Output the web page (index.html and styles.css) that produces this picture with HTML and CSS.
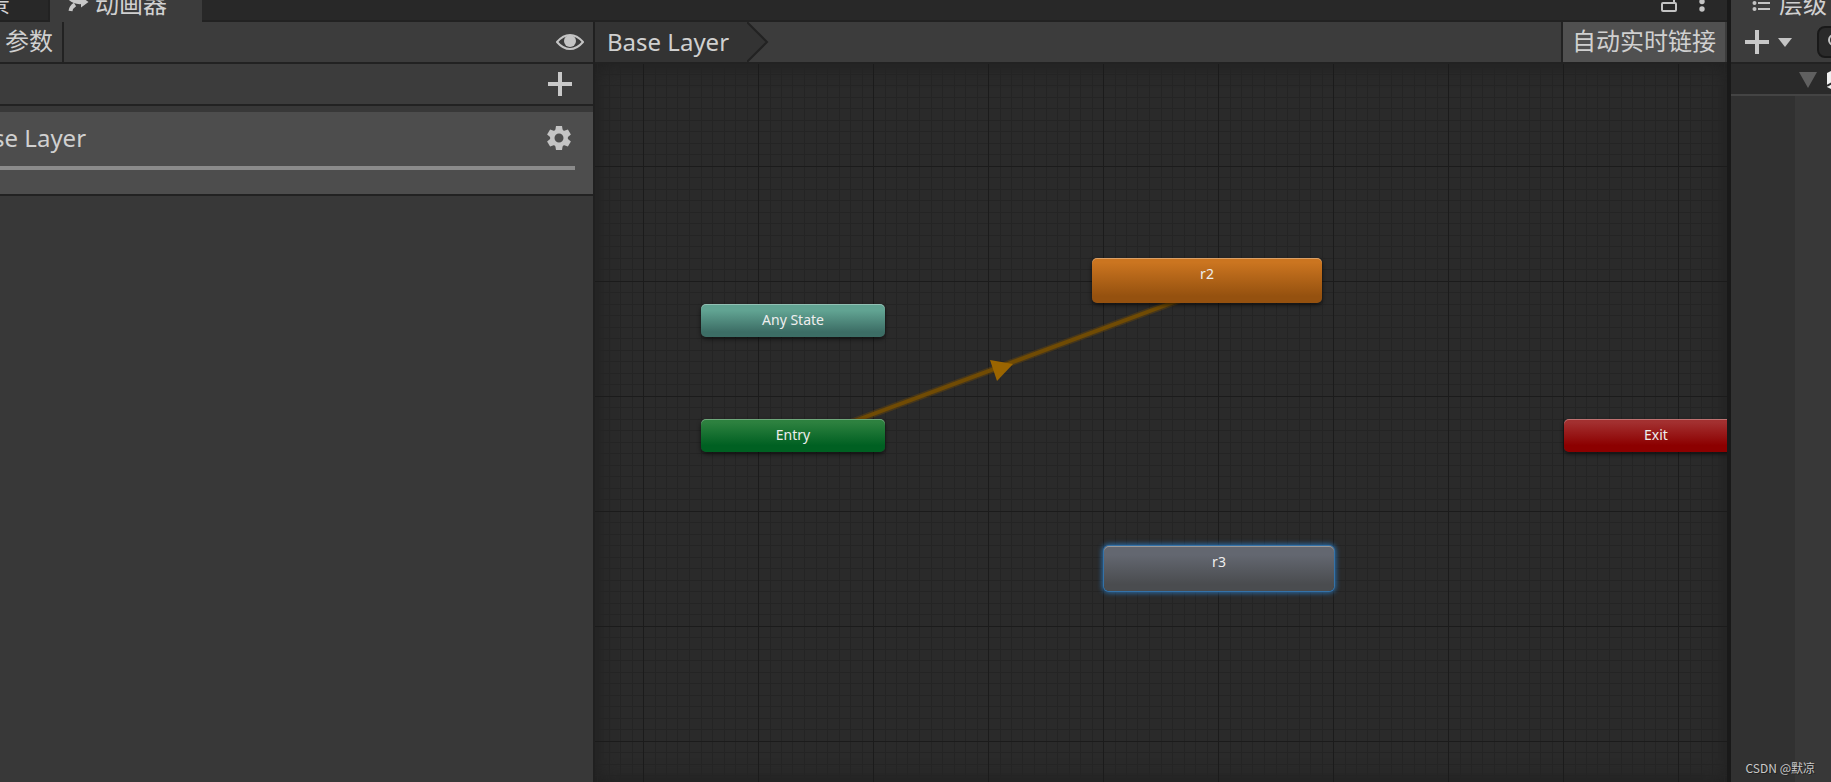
FILE: index.html
```html
<!DOCTYPE html>
<html lang="zh-CN">
<head>
<meta charset="utf-8">
<title>动画器</title>
<link rel="stylesheet" href="styles.css">
</head>
<body>
<div class="editor">
  <section class="animator">
    <header class="tabs">
      <button class="tab tab-scene" type="button">场景</button>
      <button class="tab tab-active" type="button">
        <svg class="tab-icon" width="22" height="24" viewBox="0 0 22 24"><path d="M1 6Q6 13 15 12" fill="none" stroke="#c8c8c8" stroke-width="4"/><path d="M14 6.500L21.500 12L14 17.500Z" fill="#c8c8c8"/><path d="M8 14.500Q4 17 3.500 21" fill="none" stroke="#c8c8c8" stroke-width="4"/></svg>
        动画器
      </button>
      <div class="window-actions">
        <button class="icon-button" type="button" aria-label="锁定"><svg width="16" height="20" viewBox="0 0 16 20"><rect x="1" y="11" width="14" height="8" rx="1" fill="none" stroke="#c4c4c4" stroke-width="2"/><path d="M13 11V6Q13 2 9 2" fill="none" stroke="#c4c4c4" stroke-width="2"/></svg></button>
        <button class="icon-button" type="button" aria-label="更多"><svg width="6" height="20" viewBox="0 0 6 20"><g fill="#c4c4c4"><circle cx="3" cy="2" r="2.700"/><circle cx="3" cy="9.500" r="2.700"/><circle cx="3" cy="17" r="2.700"/></g></svg></button>
      </div>
    </header>

    <div class="workspace">
      <aside class="layers">
        <div class="toolbar layers-toolbar">
          <button class="parameters" type="button">参数</button>
          <button class="icon-button" type="button" aria-label="显示"><svg width="28" height="18" viewBox="0 0 28 18"><path d="M1 9Q7 2 14 2T27 9Q21 16 14 16T1 9Z" fill="none" stroke="#c4c4c4" stroke-width="2"/><circle cx="14" cy="8" r="6" fill="#c4c4c4"/></svg></button>
        </div>
        <div class="add-row">
          <button class="icon-button" type="button" aria-label="添加图层"><svg width="24" height="24" viewBox="0 0 24 24"><path d="M12 0V24M0 12H24" stroke="#c8c8c8" stroke-width="4"/></svg></button>
        </div>
        <div class="layer">
          <div class="layer-head">
            <span class="layer-name">Base Layer</span>
            <button class="icon-button" type="button" aria-label="图层设置"><svg width="24" height="24" viewBox="0 0 24 24"><g fill="#c4c4c4"><path id="tooth" d="M9 0H15L16 6H8Z"/><use href="#tooth" transform="rotate(60 12 12)"/><use href="#tooth" transform="rotate(120 12 12)"/><use href="#tooth" transform="rotate(180 12 12)"/><use href="#tooth" transform="rotate(240 12 12)"/><use href="#tooth" transform="rotate(300 12 12)"/></g><circle cx="12" cy="12" r="6.700" fill="none" stroke="#c4c4c4" stroke-width="4.400"/></svg></button>
          </div>
          <div class="weight"></div>
        </div>
      </aside>

      <main class="graph">
        <nav class="toolbar graph-toolbar">
          <button class="crumb" type="button">Base Layer</button>
          <svg class="crumb-end" width="22" height="40" viewBox="0 0 22 40"><path d="M0 0L20 20L0 40Z" fill="#333"/><path d="M0 0L20 20L0 40" fill="none" stroke="#222" stroke-width="2"/></svg>
          <button class="live-link" type="button">自动实时链接</button>
        </nav>
        <div class="canvas">
          <svg class="canvas-lines" width="100%" height="100%">
            <defs>
              <pattern id="grid" x="48" y="102" width="115" height="115" patternUnits="userSpaceOnUse">
                <path d="M12.500 0V115M23.500 0V115M34.500 0V115M46.500 0V115M58.500 0V115M69.500 0V115M81.500 0V115M92.500 0V115M104.500 0V115M0 11.500H115M0 23.500H115M0 34.500H115M0 46.500H115M0 57.500H115M0 69.500H115M0 80.500H115M0 92.500H115M0 103.500H115" stroke="#242424"/>
                <path d="M.5 0V115M0 .5H115" stroke="#1b1b1b"/>
              </pattern>
            </defs>
            <rect width="100%" height="100%" fill="url(#grid)"/>
            <path d="M238 365L606 228" stroke="#704b08" stroke-opacity=".4" stroke-width="7" fill="none"/>
            <path d="M238 365L606 228" stroke="#704b04" stroke-width="4" fill="none"/>
            <path d="M395 296L418 300L402 317Z" fill="#9b6500"/>
          </svg>
          <div class="node small any">Any State</div>
          <div class="node small entry">Entry</div>
          <div class="node small exit">Exit</div>
          <div class="node state r2">r2</div>
          <div class="node state r3">r3</div>
        </div>
      </main>
    </div>
  </section>

  <aside class="hierarchy">
    <header class="hierarchy-tab">
      <svg width="18" height="22" viewBox="0 0 18 22"><g fill="#c4c4c4"><circle cx="2.500" cy="3" r="2"/><circle cx="2.500" cy="9" r="2"/><path d="M6 2H18V4H6ZM6 8H18V10H6Z"/></g></svg>
      层级
    </header>
    <div class="hierarchy-tools">
      <button class="icon-button add-menu" type="button" aria-label="创建"><svg width="48" height="24" viewBox="0 0 48 24"><path d="M12 0V24M0 12H24" stroke="#c8c8c8" stroke-width="4"/><path d="M33 8H47L40 17Z" fill="#c4c4c4"/></svg></button>
      <label class="search"><svg width="18" height="18" viewBox="0 0 18 18"><circle cx="6" cy="7" r="5" fill="none" stroke="#c4c4c4" stroke-width="2"/><path d="M10 11L16 17" stroke="#c4c4c4" stroke-width="2"/></svg><input type="search" aria-label="搜索"></label>
    </div>
    <div class="scene-row">
      <svg width="18" height="16" viewBox="0 0 18 16"><path d="M0 0H18L9 16Z" fill="#606060"/></svg>
      <svg width="20" height="20" viewBox="0 0 20 20"><path d="M0 3L6 0L19 4V17L6 20L0 17Z" fill="#f0f0f0"/><path d="M0 16L5 13" fill="none" stroke="#2a2a2a" stroke-width="2"/></svg>
    </div>
    <div class="tree"><div class="gutter"></div></div>
  </aside>
  <div class="watermark">CSDN @默凉</div>
</div>
</body>
</html>
```
FILE: styles.css
```css
* { box-sizing: border-box; }

body {
  margin: 0;
  background: #383838;
  color: #d0d0d0;
  font: 24px/32px "Noto Sans", "Noto Sans CJK SC", sans-serif;
}

button {
  margin: 0;
  padding: 0;
  border: 0;
  background: none;
  color: inherit;
  font: inherit;
}

svg { display: block; flex: none; }

.icon-button { display: flex; flex: none; }

.editor {
  display: grid;
  grid-template-columns: minmax(0, 1fr) 100px;
  height: 100vh;
  overflow: hidden;
}

.animator {
  display: flex;
  flex-direction: column;
  min-width: 0;
  border-right: 4px solid #191919;
}

.tabs {
  display: flex;
  align-items: flex-end;
  height: 22px;
  flex: none;
  overflow: hidden;
  background: #282828;
  box-shadow: inset 0 -2px #222;
}

.tab {
  display: flex;
  align-items: center;
  gap: 6px;
  height: 36px;
  flex: none;
  white-space: nowrap;
}

.tab-scene {
  justify-content: flex-end;
  width: 50px;
  padding-right: 38px;
  border-right: 2px solid #222;
  border-bottom: 2px solid #222;
}

.tab-active {
  width: 152px;
  padding-left: 17px;
  background: #3c3c3c;
}

.tab-icon { margin-bottom: 4px; }

.window-actions {
  display: flex;
  gap: 22px;
  margin-left: auto;
  padding: 0 22px 10px 0;
}

.workspace {
  display: grid;
  grid-template-columns: 593px minmax(0, 1fr);
  flex: 1;
  gap: 2px;
  min-height: 0;
  background: #202020;
}

.layers { background: #383838; overflow: hidden; }

.toolbar {
  display: flex;
  align-items: center;
  height: 42px;
  border-bottom: 2px solid #222;
  background: #3c3c3c;
}

.layers-toolbar { justify-content: space-between; padding-right: 9px; }

.parameters {
  width: 64px;
  height: 40px;
  padding: 0 0 2px 5px;
  border-right: 2px solid #222;
  text-align: left;
  white-space: nowrap;
}

.add-row {
  display: flex;
  justify-content: flex-end;
  align-items: center;
  height: 42px;
  padding-right: 21px;
  border-bottom: 2px solid #222;
  background: #3c3c3c;
}

.layer {
  height: 84px;
  margin-top: 6px;
  border-bottom: 2px solid #222;
  background: #4d4d4d;
}

.layer-head {
  display: flex;
  align-items: center;
  justify-content: space-between;
  height: 54px;
  padding: 0 22px 2px 0;
}

.layer-name { margin-left: -36px; white-space: nowrap; }

.weight { height: 4px; margin-right: 18px; background: #8b8b8b; }

.graph { display: flex; flex-direction: column; min-width: 0; }

.graph-toolbar { flex: none; padding-right: 2px; }

.crumb {
  height: 40px;
  width: 152px;
  padding-left: 12px;
  background: #333;
  text-align: left;
  white-space: nowrap;
}

.live-link {
  width: 164px;
  height: 40px;
  margin-left: auto;
  padding-bottom: 2px;
  border-left: 2px solid #222;
  background: #505050;
  white-space: nowrap;
}

.canvas {
  position: relative;
  flex: 1;
  overflow: hidden;
  background: #2a2a2a;
}

.canvas::before {
  content: "";
  position: absolute;
  inset: 0;
  box-shadow: inset 0 0 20px #1e1e1e;
  pointer-events: none;
}

.canvas-lines { position: absolute; inset: 0; }

.node {
  position: absolute;
  border-radius: 5px;
  color: #eee;
  font-size: 14px;
  text-align: center;
  box-shadow: inset 0 1px #ffffff50, 0 2px 4px #0009;
}

.small { width: 184px; height: 33px; line-height: 32px; }
.state { width: 230px; height: 45px; line-height: 32px; }

.any { left: 106px; top: 240px; background: linear-gradient(#61a392 20%, #3c6d65 85%); }
.entry { left: 106px; top: 355px; background: linear-gradient(#2d813f 10%, #006022 80%); }
.exit { left: 969px; top: 355px; background: linear-gradient(#a33030 10%, #8c0000 80%); }
.r2 { left: 497px; top: 194px; background: linear-gradient(#cb7520 10%, #95510f 85%); }

.r3 {
  left: 509px;
  top: 482px;
  background: linear-gradient(#636770 20%, #4a4c4f 85%);
  box-shadow: inset 0 1px #999, 0 0 0 1px #3472a8, 0 0 5px 2px #286ca8;
}

.hierarchy {
  display: flex;
  flex-direction: column;
  overflow: hidden;
  background: #3c3c3c;
}

.hierarchy-tab {
  display: flex;
  align-items: flex-end;
  flex: none;
  gap: 9px;
  height: 22px;
  padding-left: 21px;
  line-height: 36px;
  white-space: nowrap;
}

.hierarchy-tools {
  display: flex;
  align-items: center;
  flex: none;
  gap: 24px;
  height: 42px;
  padding-left: 14px;
  border-bottom: 2px solid #222;
}

.search {
  display: flex;
  align-items: center;
  flex: none;
  width: 240px;
  height: 32px;
  padding-left: 9px;
  border: 2px solid #191919;
  border-radius: 8px;
  background: #2a2a2a;
}

.search input { width: 180px; border: 0; background: none; color: inherit; }

.scene-row {
  display: flex;
  align-items: center;
  flex: none;
  gap: 10px;
  height: 32px;
  padding: 2px 0 0 68px;
  border-bottom: 2px solid #444;
  background: #2a2a2a;
}

.tree { flex: 1; background: #383838; }
.gutter { width: 64px; height: 100%; background: #313131; }

.watermark {
  position: absolute;
  right: 16px;
  bottom: 4px;
  color: #c8c8c8;
  font: 12px/20px "Noto Sans CJK SC", sans-serif;
  text-shadow: 1px 1px #222;
}
```
